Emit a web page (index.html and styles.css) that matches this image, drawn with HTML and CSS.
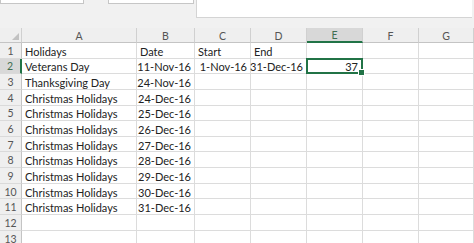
FILE: index.html
```html
<!DOCTYPE html>
<html>

<head>
    <title>Holidays</title>
    <link rel="stylesheet" href="styles.css">
</head>

<body>

    <div class="toolbar">
        <div class="box box-name"></div>
        <div class="box box-func"></div>
        <div class="formula"></div>
    </div>

    <div class="sheet">
        <div class="hd corner"><span class="tri"></span></div>
        <div class="hd col">A</div>
        <div class="hd col">B</div>
        <div class="hd col">C</div>
        <div class="hd col">D</div>
        <div class="hd col active-col">E</div>
        <div class="hd col">F</div>
        <div class="hd col">G</div>

        <div class="hd row">1</div>
        <div class="cell">Holidays</div>
        <div class="cell">Date</div>
        <div class="cell">Start</div>
        <div class="cell">End</div>
        <div class="cell"></div>
        <div class="cell"></div>
        <div class="cell"></div>

        <div class="hd row active-row">2</div>
        <div class="cell">Veterans Day</div>
        <div class="cell num">11-Nov-16</div>
        <div class="cell num">1-Nov-16</div>
        <div class="cell num">31-Dec-16</div>
        <div class="cell num selected">37<span class="handle"></span></div>
        <div class="cell"></div>
        <div class="cell"></div>

        <div class="hd row">3</div>
        <div class="cell">Thanksgiving Day</div>
        <div class="cell num">24-Nov-16</div>
        <div class="cell"></div>
        <div class="cell"></div>
        <div class="cell"></div>
        <div class="cell"></div>
        <div class="cell"></div>

        <div class="hd row">4</div>
        <div class="cell">Christmas Holidays</div>
        <div class="cell num">24-Dec-16</div>
        <div class="cell"></div>
        <div class="cell"></div>
        <div class="cell"></div>
        <div class="cell"></div>
        <div class="cell"></div>

        <div class="hd row">5</div>
        <div class="cell">Christmas Holidays</div>
        <div class="cell num">25-Dec-16</div>
        <div class="cell"></div>
        <div class="cell"></div>
        <div class="cell"></div>
        <div class="cell"></div>
        <div class="cell"></div>

        <div class="hd row">6</div>
        <div class="cell">Christmas Holidays</div>
        <div class="cell num">26-Dec-16</div>
        <div class="cell"></div>
        <div class="cell"></div>
        <div class="cell"></div>
        <div class="cell"></div>
        <div class="cell"></div>

        <div class="hd row">7</div>
        <div class="cell">Christmas Holidays</div>
        <div class="cell num">27-Dec-16</div>
        <div class="cell"></div>
        <div class="cell"></div>
        <div class="cell"></div>
        <div class="cell"></div>
        <div class="cell"></div>

        <div class="hd row">8</div>
        <div class="cell">Christmas Holidays</div>
        <div class="cell num">28-Dec-16</div>
        <div class="cell"></div>
        <div class="cell"></div>
        <div class="cell"></div>
        <div class="cell"></div>
        <div class="cell"></div>

        <div class="hd row">9</div>
        <div class="cell">Christmas Holidays</div>
        <div class="cell num">29-Dec-16</div>
        <div class="cell"></div>
        <div class="cell"></div>
        <div class="cell"></div>
        <div class="cell"></div>
        <div class="cell"></div>

        <div class="hd row">10</div>
        <div class="cell">Christmas Holidays</div>
        <div class="cell num">30-Dec-16</div>
        <div class="cell"></div>
        <div class="cell"></div>
        <div class="cell"></div>
        <div class="cell"></div>
        <div class="cell"></div>

        <div class="hd row">11</div>
        <div class="cell">Christmas Holidays</div>
        <div class="cell num">31-Dec-16</div>
        <div class="cell"></div>
        <div class="cell"></div>
        <div class="cell"></div>
        <div class="cell"></div>
        <div class="cell"></div>

        <div class="hd row">12</div>
        <div class="cell"></div>
        <div class="cell"></div>
        <div class="cell"></div>
        <div class="cell"></div>
        <div class="cell"></div>
        <div class="cell"></div>
        <div class="cell"></div>

        <div class="hd row">13</div>
        <div class="cell"></div>
        <div class="cell"></div>
        <div class="cell"></div>
        <div class="cell"></div>
        <div class="cell"></div>
        <div class="cell"></div>
        <div class="cell"></div>
    </div>

</body>

</html>
```

FILE: styles.css
```css
body {
    margin: 0;
    width: 474px;
    height: 243px;
    overflow: hidden;
    background: #ffffff;
    font-family: Lato, 'Noto Sans', sans-serif;
    color: #222222;
}

.toolbar {
    display: flex;
    height: 28px;
    background: #f1f1f1;
}

.box {
    height: 3px;
    background: #ffffff;
    border: 1px solid #c6c6c6;
    border-top: none;
}

.box-name {
    width: 82px;
}

.box-func {
    width: 84px;
    margin-left: 24px;
}

.formula {
    width: 276px;
    height: 18px;
    margin-left: 2px;
    background: #ffffff;
    border-left: 1px solid #d4d4d4;
    border-bottom: 1px solid #d4d4d4;
    box-sizing: border-box;
}

.sheet {
    display: grid;
    grid-template-columns: 22px 115px 58px 56px 56px 56px 56px 55px;
    grid-template-rows: 15px repeat(13, 15.65px);
    font-size: 11px;
}

.hd {
    background: #efefef;
    color: #555555;
    font-size: 10.5px;
    border-right: 1px solid #d0d0d0;
    border-bottom: 1px solid #c4c4c4;
    box-sizing: border-box;
    display: flex;
    align-items: center;
    padding-top: 1px;
}

.col {
    justify-content: center;
}

.row {
    justify-content: center;
    border-bottom: 1px solid #dadada;
    border-right: 1px solid #c4c4c4;
}

.corner {
    position: relative;
}

.tri {
    position: absolute;
    right: 2px;
    bottom: 2px;
    width: 0;
    height: 0;
    border-left: 7px solid transparent;
    border-bottom: 7px solid #c2c2c2;
}

.active-col {
    background: #d8d8d8;
    color: #3f6e52;
    border-bottom: 2px solid #217346;
}

.active-row {
    background: #d8d8d8;
    color: #3f6e52;
    border-right: 2px solid #217346;
}

.cell {
    border-right: 1px solid #dcdcdc;
    border-bottom: 1px solid #dcdcdc;
    box-sizing: border-box;
    padding: 2px 3px 0;
    display: flex;
    align-items: center;
    white-space: nowrap;
}

.num {
    justify-content: flex-end;
}

.selected {
    position: relative;
    border: 2px solid #217346;
    margin: -1px 0 0 -1px;
}

.handle {
    position: absolute;
    right: -4px;
    bottom: -4px;
    width: 5px;
    height: 5px;
    background: #217346;
    border: 1px solid #ffffff;
}
```
